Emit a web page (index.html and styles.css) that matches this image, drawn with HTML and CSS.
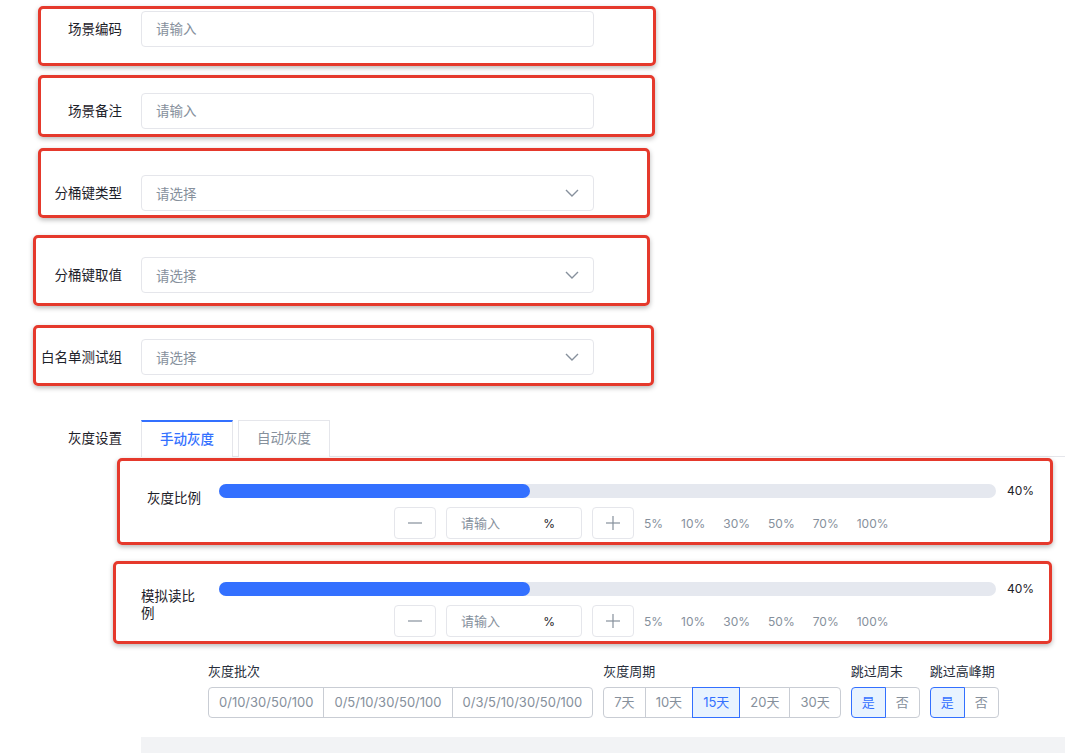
FILE: index.html
```html
<!DOCTYPE html>
<html lang="zh-CN">
<head>
<meta charset="UTF-8">
<meta name="viewport" content="width=device-width, initial-scale=1.0">
<title>场景配置</title>
<link rel="stylesheet" href="styles.css">
</head>
<body>

<div class="form">

  <div class="form-item">
    <label class="form-label">场景编码</label>
    <input class="input" placeholder="请输入">
    <div class="mark mark-1"></div>
  </div>

  <div class="form-item">
    <label class="form-label">场景备注</label>
    <input class="input" placeholder="请输入">
    <div class="mark mark-2"></div>
  </div>

  <div class="form-item">
    <label class="form-label">分桶键类型</label>
    <div class="select">
      <span class="placeholder">请选择</span>
      <svg class="arrow" width="14" height="8" viewBox="0 0 14 8"><polyline points="1,1 7,7 13,1" fill="none" stroke="#86909c" stroke-width="1.4"/></svg>
    </div>
    <div class="mark mark-3"></div>
  </div>

  <div class="form-item">
    <label class="form-label">分桶键取值</label>
    <div class="select">
      <span class="placeholder">请选择</span>
      <svg class="arrow" width="14" height="8" viewBox="0 0 14 8"><polyline points="1,1 7,7 13,1" fill="none" stroke="#86909c" stroke-width="1.4"/></svg>
    </div>
    <div class="mark mark-4"></div>
  </div>

  <div class="form-item">
    <label class="form-label">白名单测试组</label>
    <div class="select">
      <span class="placeholder">请选择</span>
      <svg class="arrow" width="14" height="8" viewBox="0 0 14 8"><polyline points="1,1 7,7 13,1" fill="none" stroke="#86909c" stroke-width="1.4"/></svg>
    </div>
    <div class="mark mark-5"></div>
  </div>

  <div class="form-item tabs-item">
    <label class="form-label">灰度设置</label>
    <div class="tabs">
      <div class="tab-nav">
        <div class="tab active">手动灰度</div>
        <div class="tab">自动灰度</div>
      </div>

      <div class="tab-pane">

        <div class="slider-item">
          <div class="slider-label">灰度比例</div>
          <div class="slider-body">
            <div class="slider-row">
              <div class="track"><div class="fill" style="width: 40%"></div></div>
              <span class="value">40%</span>
            </div>
            <div class="controls">
              <button class="step-btn"><svg width="16" height="16" viewBox="0 0 16 16"><line x1="1" y1="8" x2="15" y2="8" stroke="#86909c" stroke-width="1.2"/></svg></button>
              <div class="pct-input"><input placeholder="请输入"><span class="suffix">%</span></div>
              <button class="step-btn"><svg width="16" height="16" viewBox="0 0 16 16"><line x1="1" y1="8" x2="15" y2="8" stroke="#86909c" stroke-width="1.2"/><line x1="8" y1="1" x2="8" y2="15" stroke="#86909c" stroke-width="1.2"/></svg></button>
              <div class="presets">
                <span>5%</span><span>10%</span><span>30%</span><span>50%</span><span>70%</span><span>100%</span>
              </div>
            </div>
          </div>
          <div class="mark mark-s1"></div>
        </div>

        <div class="slider-item">
          <div class="slider-label wrap">模拟读比例</div>
          <div class="slider-body">
            <div class="slider-row">
              <div class="track"><div class="fill" style="width: 40%"></div></div>
              <span class="value">40%</span>
            </div>
            <div class="controls">
              <button class="step-btn"><svg width="16" height="16" viewBox="0 0 16 16"><line x1="1" y1="8" x2="15" y2="8" stroke="#86909c" stroke-width="1.2"/></svg></button>
              <div class="pct-input"><input placeholder="请输入"><span class="suffix">%</span></div>
              <button class="step-btn"><svg width="16" height="16" viewBox="0 0 16 16"><line x1="1" y1="8" x2="15" y2="8" stroke="#86909c" stroke-width="1.2"/><line x1="8" y1="1" x2="8" y2="15" stroke="#86909c" stroke-width="1.2"/></svg></button>
              <div class="presets">
                <span>5%</span><span>10%</span><span>30%</span><span>50%</span><span>70%</span><span>100%</span>
              </div>
            </div>
          </div>
          <div class="mark mark-s2"></div>
        </div>

        <div class="batch">
          <div class="batch-group">
            <div class="batch-label">灰度批次</div>
            <div class="seg-group">
              <span class="seg">0/10/30/50/100</span>
              <span class="seg">0/5/10/30/50/100</span>
              <span class="seg">0/3/5/10/30/50/100</span>
            </div>
          </div>
          <div class="batch-group">
            <div class="batch-label">灰度周期</div>
            <div class="seg-group">
              <span class="seg">7天</span>
              <span class="seg">10天</span>
              <span class="seg active">15天</span>
              <span class="seg">20天</span>
              <span class="seg">30天</span>
            </div>
          </div>
          <div class="batch-group">
            <div class="batch-label">跳过周末</div>
            <div class="seg-group">
              <span class="seg active">是</span>
              <span class="seg">否</span>
            </div>
          </div>
          <div class="batch-group">
            <div class="batch-label">跳过高峰期</div>
            <div class="seg-group">
              <span class="seg active">是</span>
              <span class="seg">否</span>
            </div>
          </div>
        </div>

        <div class="pane-foot"></div>
      </div>
    </div>
  </div>

</div>

</body>
</html>
```

FILE: styles.css
```css
body {
  margin: 0;
  background-color: #ffffff;
  font-family: 'Inter', 'Noto Sans CJK SC', sans-serif;
  color: #1d2129;
  overflow: hidden;
}

* {
  box-sizing: border-box;
}

.form {
  padding-top: 11px;
}

.form-item {
  position: relative;
  display: flex;
  align-items: center;
  height: 36px;
  margin-bottom: 46px;
}

.form-label {
  width: 122px;
  margin-right: 19px;
  text-align: right;
  font-size: 13.5px;
  line-height: 20px;
  flex-shrink: 0;
}

.input,
.select {
  width: 453px;
  height: 36px;
  border: 1px solid #e5e6eb;
  border-radius: 4px;
  background-color: #fff;
  padding: 0 14px;
  font-family: inherit;
  font-size: 13.5px;
  color: #1d2129;
  outline: none;
}

.input::placeholder,
.pct-input input::placeholder {
  color: #86909c;
}

.select {
  display: flex;
  align-items: center;
  justify-content: space-between;
}

.placeholder {
  color: #86909c;
}

/* red annotation frames drawn over the form */
.mark {
  position: absolute;
  border: 3px solid #e5392c;
  border-radius: 5px;
  box-shadow: 0 2px 5px rgba(0,0,0,0.28);
  pointer-events: none;
}

.mark-1 { top: -5px; bottom: -19px; left: 38px; width: 618px; }
.mark-2 { top: -18px; bottom: -8px; left: 38px; width: 617px; }
.mark-3 { top: -27px; bottom: -7px; left: 38px; width: 612px; }
.mark-4 { top: -22px; bottom: -13px; left: 33px; width: 617px; }
.mark-5 { top: -14px; bottom: -11px; left: 33px; width: 621px; }
.mark-s1 { top: -26px; bottom: -6px; left: -24px; width: 936px; }
.mark-s2 { top: -21px; bottom: -7px; left: -28px; width: 939px; }

/* tabs */
.tabs-item {
  align-items: flex-start;
  height: auto;
  margin: -1px 0 0;
}

.tabs-item .form-label {
  line-height: 36px;
}

.tabs {
  width: 924px;
}

.tab-nav {
  display: flex;
  gap: 5px;
  border-bottom: 1px solid #e5e6eb;
  height: 37px;
}

.tab {
  width: 92px;
  height: 37px;
  border: 1px solid #e5e6eb;
  border-bottom: none;
  background-color: #fff;
  text-align: center;
  line-height: 35px;
  font-size: 13.5px;
  color: #86909c;
}

.tab.active {
  border-top: 2px solid #3370ff;
  color: #3370ff;
  font-weight: 500;
  line-height: 34px;
}

.tab-pane {
  padding-top: 27px;
}

/* sliders */
.slider-item {
  position: relative;
  display: flex;
  padding-right: 31px;
  margin-bottom: 43px;
}

.slider-label {
  width: 60px;
  margin-right: 18px;
  padding-top: 4px;
  font-size: 13.5px;
  line-height: 20px;
  text-align: right;
  flex-shrink: 0;
}

.slider-label.wrap {
  padding-top: 6px;
  line-height: 17px;
  text-align: left;
}

.slider-body {
  flex: 1;
}

.slider-row {
  display: flex;
  align-items: center;
  height: 14px;
}

.track {
  flex: 1;
  height: 14px;
  border-radius: 7px;
  background-color: #e5e8ef;
}

.fill {
  height: 100%;
  border-radius: 7px;
  background-color: #3370ff;
}

.value {
  margin-left: 11px;
  font-size: 12px;
  line-height: 14px;
}

.controls {
  display: flex;
  align-items: center;
  gap: 10px;
  margin-top: 9px;
  padding-left: 175px;
}

.step-btn {
  width: 42px;
  height: 32px;
  border: 1px solid #e5e6eb;
  border-radius: 4px;
  background-color: #fff;
  padding: 0;
  display: flex;
  align-items: center;
  justify-content: center;
}

.pct-input {
  width: 136px;
  height: 32px;
  border: 1px solid #e5e6eb;
  border-radius: 4px;
  display: flex;
  align-items: center;
  padding-left: 14px;
}

.pct-input input {
  flex: 1;
  min-width: 0;
  border: none;
  outline: none;
  padding: 0;
  font-family: inherit;
  font-size: 13px;
}

.suffix {
  margin-right: 26px;
  font-size: 12px;
}

.presets {
  display: flex;
  gap: 18px;
  font-size: 12px;
  color: #86909c;
}

/* batch options */
.batch {
  display: flex;
  gap: 10px;
  margin-top: -19px;
  padding-left: 67px;
}

.batch-label {
  font-size: 13px;
  line-height: 20px;
  margin-bottom: 6px;
  color: #272e3b;
}

.seg-group {
  display: flex;
}

.seg {
  position: relative;
  height: 31px;
  line-height: 29px;
  padding: 0 10px;
  border: 1px solid #c9cdd4;
  margin-left: -1px;
  font-size: 13px;
  color: #86909c;
  background-color: #fff;
}

.seg:first-child {
  margin-left: 0;
  border-radius: 4px 0 0 4px;
}

.seg:last-child {
  border-radius: 0 4px 4px 0;
}

.seg.active {
  z-index: 1;
  border-color: #3370ff;
  background-color: #e8f3ff;
  color: #3370ff;
}

.pane-foot {
  height: 40px;
  margin-top: 19px;
  background-color: #f2f3f5;
}
```
